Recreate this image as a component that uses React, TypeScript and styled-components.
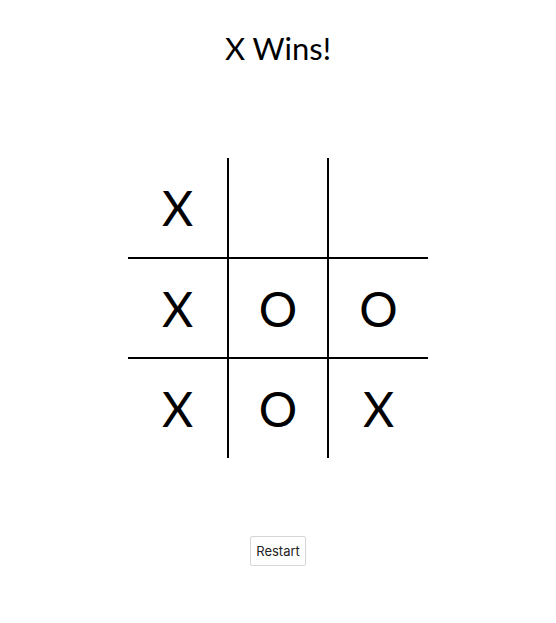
import React from "react";
import styled, { createGlobalStyle } from "styled-components";

const Global = createGlobalStyle`
  html, body { margin: 0; padding: 0; background: #ffffff; }
  body { font-family: Lato, "Noto Sans", sans-serif; color: #000; }
`;

const Page = styled.div`
  display: flex;
  flex-direction: column;
  align-items: center;
  width: 556px;
  min-height: 623px;
`;

const Title = styled.h1`
  margin: 30px 0 0;
  font-size: 31px;
  font-weight: 400;
  line-height: 36px;
`;

const Board = styled.div`
  margin-top: 92px;
  display: grid;
  grid-template-columns: repeat(3, 100px);
  grid-template-rows: repeat(3, 100px);
`;

const Cell = styled.div<{ $col: number; $row: number }>`
  box-sizing: border-box;
  display: flex;
  align-items: center;
  justify-content: center;
  font-size: 48px;
  font-weight: 400;
  border-left: ${(p) => (p.$col > 0 ? "1px solid #000" : "none")};
  border-right: ${(p) => (p.$col < 2 ? "1px solid #000" : "none")};
  border-top: ${(p) => (p.$row > 0 ? "1px solid #000" : "none")};
  border-bottom: ${(p) => (p.$row < 2 ? "1px solid #000" : "none")};
`;

const RestartButton = styled.button`
  margin-top: 78px;
  font-family: Inter, "Noto Sans", sans-serif;
  font-size: 13px;
  color: #222;
  background: #fff;
  border: 1px solid #d6d6d6;
  border-radius: 2px;
  height: 30px;
  padding: 0 5px;
`;

const cells = ["X", "", "", "X", "O", "O", "X", "O", "X"];

export default function App() {
  return (
    <Page>
      <Global />
      <Title>X Wins!</Title>
      <Board>
        {cells.map((v, i) => (
          <Cell key={i} $col={i % 3} $row={Math.floor(i / 3)}>
            {v}
          </Cell>
        ))}
      </Board>
      <RestartButton>Restart</RestartButton>
    </Page>
  );
}
